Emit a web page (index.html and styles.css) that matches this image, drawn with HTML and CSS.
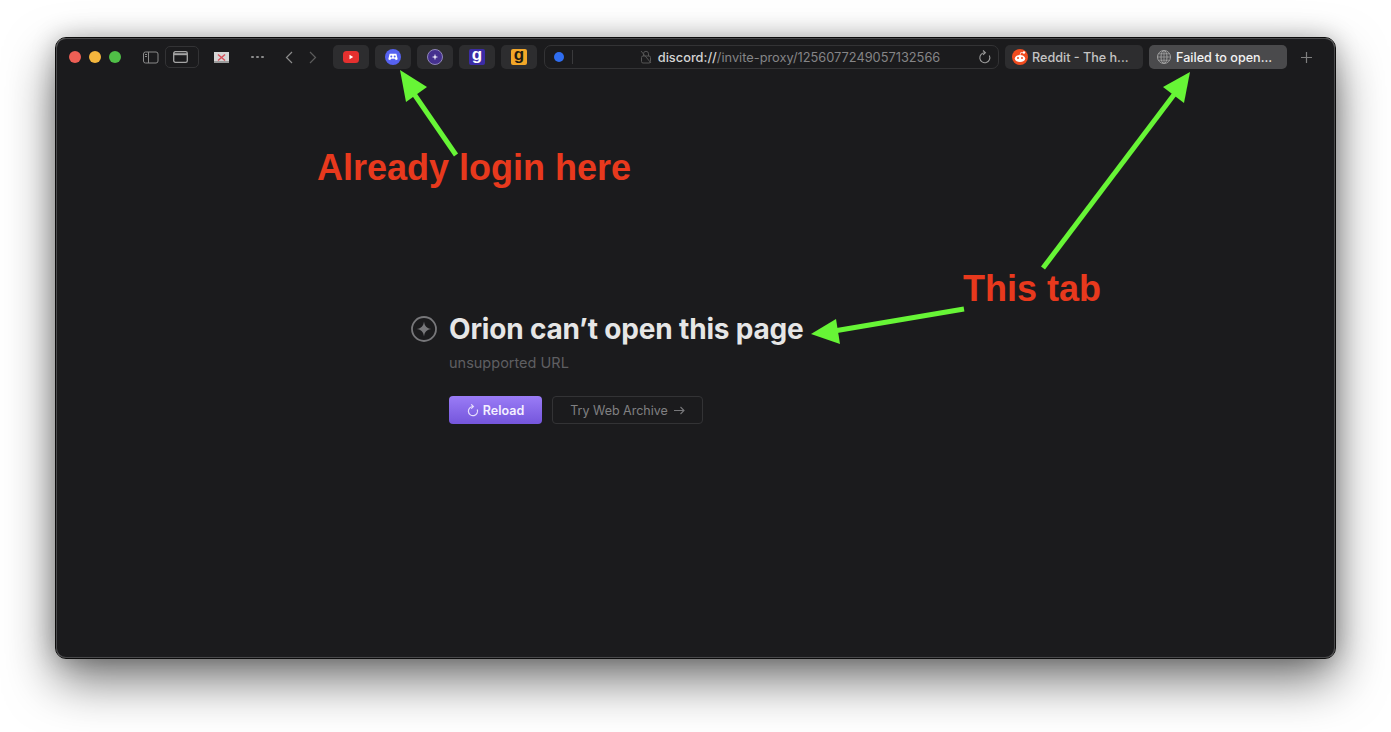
FILE: index.html
```html
<!DOCTYPE html>
<html lang="en">
  <head>
    <meta charset="UTF-8" />
    <title>Orion can't open this page</title>
    <link rel="stylesheet" href="styles.css">
  </head>

  <body>
    <div class="window">
      <div class="toolbar">
        <div class="lights">
          <span class="light red"></span>
          <span class="light yellow"></span>
          <span class="light green"></span>
        </div>

        <svg class="sidebarIcon" width="16" height="13" viewBox="0 0 16 13" fill="none">
          <rect x="0.5" y="1" width="14.5" height="11" rx="2" stroke="#8a8a8a" />
          <path d="M5.5 1v11" stroke="#8a8a8a" />
          <path d="M2 3.5h2M2 5.5h2" stroke="#8a8a8a" />
        </svg>

        <div class="tabSwitch">
          <svg width="15" height="12" viewBox="0 0 15 12" fill="none">
            <rect x="0.7" y="0.7" width="13.6" height="10.6" rx="1.6" stroke="#a5a5a5" stroke-width="1.3" />
            <path d="M1 3.2h13" stroke="#a5a5a5" stroke-width="2" />
          </svg>
        </div>

        <svg class="mailThumb" width="15" height="11" viewBox="0 0 15 11">
          <rect width="15" height="11" fill="#d6d6d6" />
          <rect y="9" width="15" height="2" fill="#9c9c9c" />
          <path d="M4 2.5l7 6M11 2.5l-7 6" stroke="#d8525c" stroke-width="1.5" />
        </svg>

        <div class="dots"><span></span><span></span><span></span></div>

        <svg class="chevron" width="8" height="13" viewBox="0 0 8 13" fill="none">
          <path d="M7 1L1.5 6.5 7 12" stroke="#8c8c8c" stroke-width="1.2" />
        </svg>
        <svg class="chevron forward" width="8" height="13" viewBox="0 0 8 13" fill="none">
          <path d="M1 1l5.5 5.5L1 12" stroke="#5c5c5c" stroke-width="1.2" />
        </svg>

        <div class="pins">
          <div class="pin">
            <svg width="16" height="12" viewBox="0 0 16 12">
              <rect width="16" height="12" rx="3.5" fill="#e5302f" />
              <path d="M6.5 3.8v4.4L10.2 6z" fill="#fff" />
            </svg>
          </div>
          <div class="pin">
            <svg width="16" height="16" viewBox="0 0 16 16">
              <circle cx="8" cy="8" r="8" fill="#5662f0" />
              <path d="M4.6 4.800h6.800l1.300 5.400-1.800 1-1-1.400H6.100l-1 1.400-1.800-1z" fill="#fff" />
              <circle cx="6.300" cy="7.500" r="1" fill="#5662f0" />
              <circle cx="9.700" cy="7.500" r="1" fill="#5662f0" />
            </svg>
          </div>
          <div class="pin">
            <svg width="16" height="16" viewBox="0 0 16 16">
              <circle cx="8" cy="8" r="7.500" fill="#45308f" stroke="#8f86b8" />
              <path d="M8 4.800l.8 2.400 2.400.8-2.400.8-.8 2.400-.8-2.400L4.800 8l2.400-.8z" fill="#e8e4f6" />
            </svg>
          </div>
          <div class="pin">
            <span class="kagi indigo">g</span>
          </div>
          <div class="pin">
            <span class="kagi amber">g</span>
          </div>
        </div>

        <div class="urlBar">
          <span class="urlDot"></span>
          <span class="urlSep"></span>
          <div class="urlText">
            <svg width="12" height="14" viewBox="0 0 12 14" fill="none">
              <rect x="1.500" y="6" width="9" height="7" rx="1.500" stroke="#555" />
              <path d="M3.500 6V3.800a2.500 2.500 0 0 1 5 0V6M1 1l10 12" stroke="#555" />
            </svg>
            <span><b>discord:</b><b>//</b>/invite-proxy/1256077249057132566</span>
          </div>
          <svg class="urlReload" width="13" height="14" viewBox="0 0 13 14" fill="none">
            <path d="M7 2.700A5 5 0 1 0 11.300 5.500" stroke="#9b9b9b" stroke-width="1.100" />
            <path d="M5 .5l2.400 2.200L5 4.800" stroke="#9b9b9b" stroke-width="1.100" />
          </svg>
        </div>

        <div class="tab">
          <svg width="16" height="16" viewBox="0 0 16 16">
            <circle cx="8" cy="8" r="8" fill="#f04c1f" />
            <ellipse cx="8" cy="9.500" rx="5.200" ry="3.600" fill="#fff" />
            <circle cx="6" cy="9" r="1" fill="#f04c1f" />
            <circle cx="10" cy="9" r="1" fill="#f04c1f" />
            <circle cx="12" cy="3.500" r="1.200" fill="#fff" />
            <path d="M8 6l.8-2.500 3 .3" stroke="#fff" fill="none" stroke-width="0.700" />
          </svg>
          <span class="tabTitle">Reddit - The h...</span>
        </div>
        <div class="tab active">
          <svg width="14" height="14" viewBox="0 0 14 14" fill="none">
            <circle cx="7" cy="7" r="6.500" stroke="#a0a0a0" />
            <ellipse cx="7" cy="7" rx="3" ry="6.500" stroke="#a0a0a0" />
            <path d="M7 .5v13M.5 7h13M1.500 3.800h11M1.500 10.200h11" stroke="#a0a0a0" stroke-width="0.800" />
          </svg>
          <span class="tabTitle">Failed to open...</span>
        </div>

        <svg class="plus" width="11" height="11" viewBox="0 0 11 11">
          <path d="M5.500 0v11M0 5.500h11" stroke="#7f7f7f" stroke-width="1.200" />
        </svg>
      </div>

      <div class="errorPage">
        <div class="errorHead">
          <svg width="26" height="26" viewBox="0 0 26 26" fill="none">
            <circle cx="13" cy="13" r="12" stroke="#77777a" stroke-width="1.800" />
            <path d="M13 5.500c.8 5 2.500 6.700 7.500 7.500-5 .8-6.700 2.500-7.500 7.500-.8-5-2.500-6.700-7.500-7.500 5-.8 6.700-2.500 7.500-7.500z" fill="#77777a" />
          </svg>
          <h1>Orion can’t open this page</h1>
        </div>
        <p class="errorSub">unsupported URL</p>
        <div class="errorBtns">
          <button class="reloadBtn">
            <svg width="12" height="13" viewBox="0 0 12 13" fill="none">
              <path d="M6 2.500A4.600 4.600 0 1 0 10.300 5.500" stroke="#e6defc" stroke-width="1.200" />
              <path d="M4.200 .4L6.400 2.500 4.200 4.600" stroke="#e6defc" stroke-width="1.200" />
            </svg>
            Reload
          </button>
          <button class="archiveBtn">
            Try Web Archive
            <svg width="11" height="9" viewBox="0 0 11 9" fill="none">
              <path d="M0 4.500h10M6.500 1l3.500 3.500L6.500 8" stroke="#77777a" stroke-width="1.100" />
            </svg>
          </button>
        </div>
      </div>
    </div>

    <!-- annotations drawn on top of the screenshot -->
    <svg class="arrows" width="1391" height="732" viewBox="0 0 1391 732" fill="none">
      <path d="M456 155L412 91" stroke="#67f536" stroke-width="5" />
      <path d="M400 70l27 17-21 15z" fill="#67f536" />
      <path d="M1043 268L1176 92" stroke="#67f536" stroke-width="5" />
      <path d="M1190 72l-6 31-21-16z" fill="#67f536" />
      <path d="M964 309L834 331" stroke="#67f536" stroke-width="5" />
      <path d="M811 334l25-15 4 25z" fill="#67f536" />
    </svg>
    <p class="note noteLogin">Already login here</p>
    <p class="note noteTab">This tab</p>
  </body>
</html>
```

FILE: styles.css
```css
* {
  margin: 0px;
  padding: 0px;
  box-sizing: border-box;
}
body {
  width: 1391px;
  height: 732px;
  padding: 38px 0 0 56px;
  background-color: #ffffff;
  overflow: hidden;
  font-family: Inter, "Liberation Sans", sans-serif;
}

.window {
  width: 1279px;
  height: 620px;
  background-color: #1b1b1d;
  border-radius: 10px;
  border: 1px solid #4a4a4c;
  outline: 1px solid #0c0c0c;
  box-shadow: 0 22px 50px rgba(0, 0, 0, 0.55), 0 0 24px rgba(0, 0, 0, 0.25);
}

.toolbar {
  height: 36px;
  padding-left: 12px;
  display: flex;
  align-items: center;
}
.lights {
  display: flex;
  gap: 8px;
}
.light {
  width: 12px;
  height: 12px;
  border-radius: 50%;
}
.red {
  background-color: #ed5f55;
}
.yellow {
  background-color: #f4b63d;
}
.green {
  background-color: #50bf47;
}
.sidebarIcon {
  margin-left: 22px;
}
.tabSwitch {
  width: 34px;
  height: 22px;
  margin-left: 6px;
  padding: 4px 0 0 7px;
  border: 1px solid #333335;
  border-radius: 5px;
}
.tabSwitch svg {
  display: block;
}
.mailThumb {
  margin-left: 15px;
}
.dots {
  margin-left: 22px;
  display: flex;
  gap: 2px;
}
.dots span {
  width: 3px;
  height: 2px;
  background-color: #8c8c8c;
  border-radius: 1px;
}
.chevron {
  margin-left: 21px;
}
.chevron.forward {
  margin-left: 16px;
}

.pins {
  margin-left: 16px;
  display: flex;
  gap: 6px;
}
.pin {
  width: 36px;
  height: 24px;
  display: flex;
  align-items: center;
  justify-content: center;
  background-color: #2d2d2f;
  border-radius: 5px;
}
.kagi {
  width: 16px;
  height: 16px;
  border-radius: 2px;
  font-family: "Liberation Sans", sans-serif;
  font-size: 17px;
  font-weight: 700;
  line-height: 12px;
  text-align: center;
}
.indigo {
  background-color: #3b2ca6;
  color: #ffffff;
}
.amber {
  background-color: #f3a728;
  color: #1e1a12;
}

.urlBar {
  width: 455px;
  height: 24px;
  margin-left: 7px;
  padding: 0 7px 0 9px;
  display: flex;
  align-items: center;
  border: 1px solid #333335;
  border-radius: 7px;
}
.urlDot {
  width: 10px;
  height: 10px;
  border-radius: 50%;
  background-color: #2f6df0;
}
.urlSep {
  width: 1px;
  height: 14px;
  margin-left: 8px;
  background-color: #3a3a3c;
}
.urlText {
  flex: 1;
  display: flex;
  align-items: center;
  justify-content: center;
  gap: 6px;
  padding-left: 29px;
  font-size: 12.800px;
  color: #858587;
  white-space: nowrap;
}
.urlText b {
  font-weight: 500;
  color: #d4d4d4;
}
.urlReload {
  flex-shrink: 0;
}

.tab {
  width: 138px;
  height: 24px;
  margin-left: 6px;
  padding-left: 7px;
  display: flex;
  align-items: center;
  gap: 4px;
  background-color: #2d2d2f;
  border-radius: 5px;
  font-size: 12.600px;
  color: #c4c4c4;
  white-space: nowrap;
}
.tab.active {
  padding-left: 8px;
  gap: 5px;
  background-color: #4a4a4c;
  color: #f2f2f2;
}
.tabTitle {
  font-weight: 500;
}
.plus {
  margin-left: 14px;
}

.errorPage {
  padding: 237px 0 0 354px;
}
.errorHead {
  display: flex;
  align-items: center;
  gap: 12px;
}
.errorHead svg {
  flex-shrink: 0;
}
.errorHead h1 {
  font-size: 28px;
  font-weight: 700;
  line-height: 34px;
  letter-spacing: -0.18px;
  color: #e6e6e6;
}
.errorSub {
  margin-top: 8px;
  margin-left: 38px;
  font-size: 14.500px;
  line-height: 18px;
  color: #5f5f62;
}
.errorBtns {
  margin-top: 24px;
  margin-left: 38px;
  display: flex;
  gap: 10px;
}
.errorBtns button {
  height: 28px;
  display: flex;
  align-items: center;
  justify-content: center;
  font-family: Inter, "Liberation Sans", sans-serif;
  font-size: 12.500px;
  border-radius: 4px;
}
.reloadBtn {
  width: 93px;
  gap: 4px;
  border: none;
  font-weight: 600;
  color: #f4f0ff;
  background-image: linear-gradient(#9a7cf6, #7556dc);
}
.archiveBtn {
  width: 151px;
  gap: 6px;
  border: 1px solid #333335;
  font-weight: 400;
  color: #808082;
  background-color: transparent;
}

.arrows {
  position: absolute;
  top: 0;
  left: 0;
}
.note {
  position: absolute;
  font-family: "Liberation Sans", sans-serif;
  font-size: 36px;
  font-weight: 700;
  line-height: 40px;
  color: #e8391d;
  white-space: nowrap;
}
.noteLogin {
  left: 317px;
  top: 148px;
}
.noteTab {
  left: 963px;
  top: 269px;
}
```
